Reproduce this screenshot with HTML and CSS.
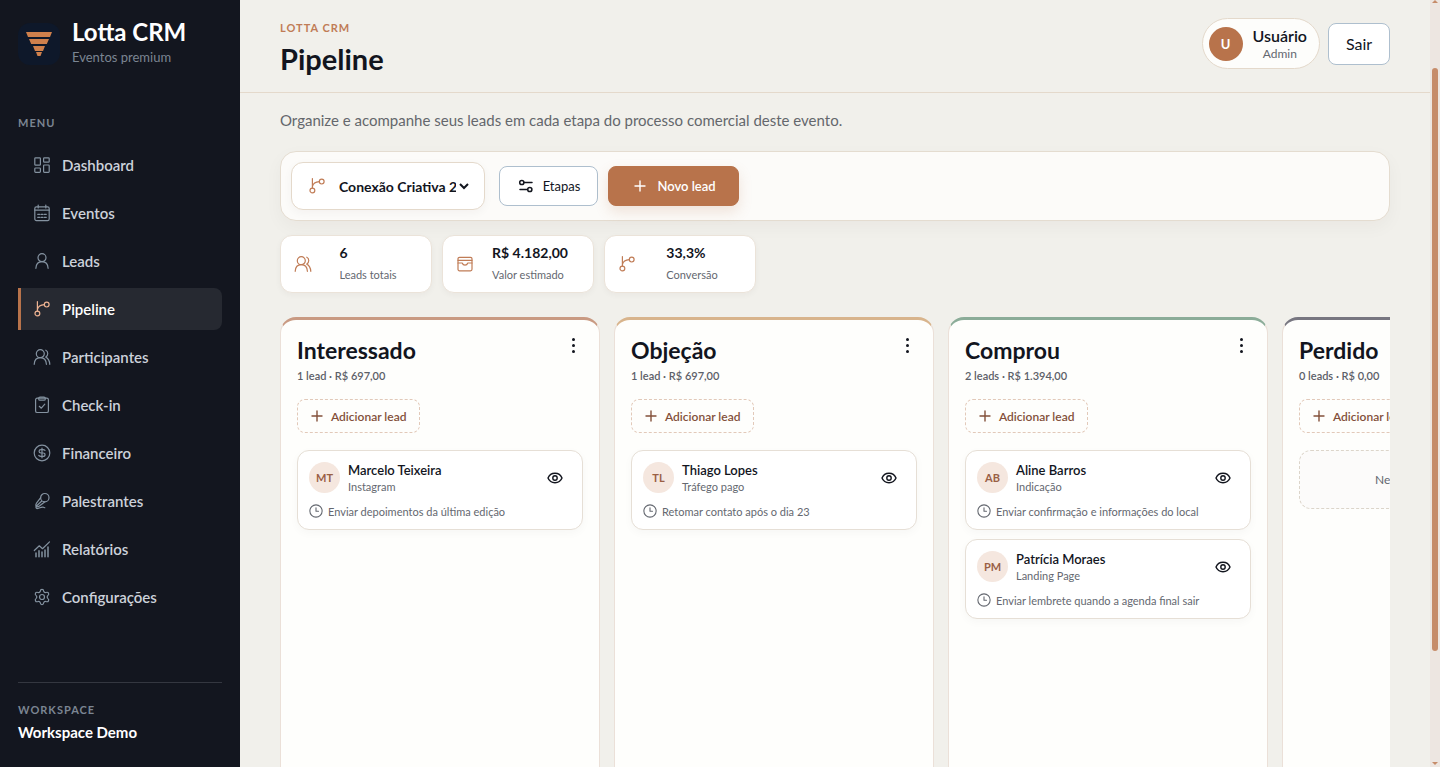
FILE: index.html
```html
<!DOCTYPE html>
<html lang="pt-BR">
<head>
    <meta charset="UTF-8">
    <meta name="viewport" content="width=device-width, initial-scale=1.0">
    <title>Lotta CRM - Pipeline</title>
    <link rel="stylesheet" href="styles.css">
</head>
<body>
    <!-- Shared icons -->
    <svg class="sprite" aria-hidden="true">
        <symbol id="i-dashboard" viewBox="0 0 18 18"><rect x="1.8" y="1.8" width="5.6" height="7.4" rx=".8"/><rect x="10.6" y="1.8" width="5.6" height="4.4" rx=".8"/><rect x="1.8" y="12" width="5.6" height="4.3" rx=".8"/><rect x="10.6" y="9" width="5.6" height="7.3" rx=".8"/></symbol>
        <symbol id="i-calendar" viewBox="0 0 18 18"><rect x="1.8" y="2.8" width="14.4" height="13.8" rx="1.6"/><path d="M5.2 1v3M12.8 1v3M1.8 6.2h14.4"/><path d="M4.7 10.3h2M8 10.3h2M11.3 10.3h2M4.7 13.3h2M8 13.3h2M11.3 13.3h2"/></symbol>
        <symbol id="i-user" viewBox="0 0 18 18"><circle cx="9" cy="5.7" r="4"/><path d="M2.9 16.3c.2-4 2.6-6.6 6.1-6.6s5.9 2.6 6.1 6.6"/></symbol>
        <symbol id="i-branch" viewBox="0 0 18 18"><circle cx="4.4" cy="13.5" r="2.4"/><circle cx="13.7" cy="4.6" r="2.4"/><path d="M4.4 1.5v9.600M4.4 9.500c.6-2.800 3-4.700 6.900-4.900"/></symbol>
        <symbol id="i-users" viewBox="0 0 18 18"><circle cx="7.3" cy="5.7" r="4"/><path d="M1.2 16.3c.2-4 2.6-6.6 6.1-6.6s5.9 2.6 6.1 6.6"/><path d="M12.8 2.2c2.6 1.1 2.6 5.5 0 6.9 2.3 1.2 3.7 3.5 4 7.2"/></symbol>
        <symbol id="i-check" viewBox="0 0 18 18"><rect x="2.6" y="2.2" width="12.8" height="14.3" rx="1.6"/><rect x="5.7" y="1.2" width="6.6" height="3" rx="1.3"/><path d="M6.3 10.3l2 1.9 3.5-4"/></symbol>
        <symbol id="i-money" viewBox="0 0 18 18"><circle cx="9" cy="9" r="7.8"/><path d="M9 4.2v9.600M12 6.300c-.5-.5-1.200-.7-2-.7H8c-2.600 0-2.600 3.400 0 3.400h2c2.700 0 2.700 3.400 0 3.400H8c-.9 0-1.600-.3-2.200-.9"/></symbol>
        <symbol id="i-mic" viewBox="0 0 18 18"><circle cx="11.800" cy="5.700" r="4.200"/><path d="M7.700 5.700L3.500 11.200c-.8 1.200-.9 2.300-.5 3.300 1 .5 2.200.3 3.400-.5l5.200-4M3 14.500l5.500-5.300M3 14.500c-.3 1.400.4 2.200 1.700 2 2.200-.4 3.300-1.700 5.600-1.300l1.500.5"/></symbol>
        <symbol id="i-chart" viewBox="0 0 18 18"><path d="M1.3 10.5l5-4.700 3.200 2.900 7-6.800"/><path d="M3 13v3.700M6 10.700v6M9 12v4.700M12 10v6.700M15 7v9.700" stroke-width="1.5"/></symbol>
        <symbol id="i-gear" viewBox="0 0 18 18"><circle cx="9" cy="9" r="2.5"/><path d="M7.3 3.3C7.4 2 8 1.400 9 1.400s1.600.6 1.700 1.900c.3.900 1.200 1.400 2.200 1.200 1.300-.5 2.100-.3 2.600.6s.3 1.700-.7 2.500c-.8.800-.8 2 0 2.800 1 .8 1.200 1.600.7 2.500s-1.300 1.100-2.600.6c-1-.2-1.900.3-2.200 1.200-.1 1.300-.7 1.900-1.700 1.900s-1.600-.6-1.700-1.900c-.3-.9-1.200-1.400-2.200-1.200-1.300.5-2.100.3-2.600-.6s-.3-1.700.7-2.500c.8-.8.8-2 0-2.800-1-.8-1.200-1.600-.7-2.500s1.300-1.100 2.600-.6c1 .2 1.900-.3 2.200-1.200z"/></symbol>
        <symbol id="i-sliders" viewBox="0 0 18 18"><circle cx="4.800" cy="5.500" r="2.100"/><path d="M7 5.500h8M3 12.500h7.500"/><circle cx="12.800" cy="12.500" r="2.100"/></symbol>
        <symbol id="i-plus" viewBox="0 0 18 18"><path d="M9 4v10M4 9h10"/></symbol>
        <symbol id="i-wallet" viewBox="0 0 18 18"><rect x="2" y="2.300" width="14" height="13.500" rx="1.500"/><path d="M2 5.300h14M2 8h4.200c.5 1.500 1.500 2.200 2.800 2.200s2.300-.7 2.800-2.200H16"/></symbol>
        <symbol id="i-eye" viewBox="0 0 18 18"><path d="M2 9c1.200-3 3.800-4.700 7-4.700S14.800 6 16 9c-1.200 3-3.800 4.700-7 4.700S3.200 12 2 9z"/><circle cx="9" cy="9" r="2.200"/></symbol>
        <symbol id="i-clock" viewBox="0 0 18 18"><circle cx="9" cy="9" r="7.900"/><path d="M9 4.800V9.300h3.200"/></symbol>
    </svg>

    <div class="app">
        <aside class="sidebar">
            <div class="brand">
                <svg class="brand-logo" viewBox="0 0 42 42" aria-hidden="true">
                    <rect width="42" height="42" rx="12" fill="#0e182a"/>
                    <path d="M8 9h26l-2 5H10zM11 16h20l-2.200 5H13.200zM15 23h12l-2 5h-8zM18 29h6l-1.500 4h-3z" fill="#cf804c"/>
                </svg>
                <div class="brand-text">
                    <div class="brand-name">Lotta CRM</div>
                    <div class="brand-sub">Eventos premium</div>
                </div>
            </div>

            <div class="menu-label">MENU</div>
            <nav class="menu">
                <a href="#"><svg class="icon"><use href="#i-dashboard"/></svg>Dashboard</a>
                <a href="#"><svg class="icon"><use href="#i-calendar"/></svg>Eventos</a>
                <a href="#"><svg class="icon"><use href="#i-user"/></svg>Leads</a>
                <a href="#" class="active"><svg class="icon"><use href="#i-branch"/></svg>Pipeline</a>
                <a href="#"><svg class="icon"><use href="#i-users"/></svg>Participantes</a>
                <a href="#"><svg class="icon"><use href="#i-check"/></svg>Check-in</a>
                <a href="#"><svg class="icon"><use href="#i-money"/></svg>Financeiro</a>
                <a href="#"><svg class="icon"><use href="#i-mic"/></svg>Palestrantes</a>
                <a href="#"><svg class="icon"><use href="#i-chart"/></svg>Relatórios</a>
                <a href="#"><svg class="icon"><use href="#i-gear"/></svg>Configurações</a>
            </nav>

            <div class="workspace">
                <div class="workspace-label">WORKSPACE</div>
                <div class="workspace-name">Workspace Demo</div>
            </div>
        </aside>

        <div class="page">
            <header class="topbar">
                <div>
                    <div class="eyebrow">LOTTA CRM</div>
                    <h1>Pipeline</h1>
                </div>
                <div class="account">
                    <div class="user-chip">
                        <span class="user-avatar">U</span>
                        <div class="user-text">
                            <div class="user-name">Usuário</div>
                            <div class="user-role">Admin</div>
                        </div>
                    </div>
                    <button type="button" class="btn logout">Sair</button>
                </div>
            </header>

            <main class="content">
                <p class="intro">Organize e acompanhe seus leads em cada etapa do processo comercial deste evento.</p>

                <div class="toolbar">
                    <div class="event-picker">
                        <svg class="icon"><use href="#i-branch"/></svg>
                        <select id="evento" aria-label="Evento">
                            <option>Conexão Criativa 2026</option>
                        </select>
                    </div>
                    <button type="button" class="btn stages"><svg class="icon"><use href="#i-sliders"/></svg>Etapas</button>
                    <button type="button" class="btn primary"><svg class="icon"><use href="#i-plus"/></svg>Novo lead</button>
                </div>

                <div class="stats">
                    <div class="stat">
                        <svg class="icon"><use href="#i-users"/></svg>
                        <div class="stat-body"><div><div class="stat-value">6</div><div class="stat-label">Leads totais</div></div></div>
                    </div>
                    <div class="stat">
                        <svg class="icon"><use href="#i-wallet"/></svg>
                        <div class="stat-body"><div><div class="stat-value">R$ 4.182,00</div><div class="stat-label">Valor estimado</div></div></div>
                    </div>
                    <div class="stat">
                        <svg class="icon"><use href="#i-branch"/></svg>
                        <div class="stat-body"><div><div class="stat-value">33,3%</div><div class="stat-label">Conversão</div></div></div>
                    </div>
                </div>

                <div class="board">
                    <section class="column interested">
                        <div class="column-head">
                            <h2>Interessado</h2>
                            <button type="button" class="more" aria-label="Opções"><i></i><i></i><i></i></button>
                        </div>
                        <div class="column-meta">1 lead · R$ 697,00</div>
                        <button type="button" class="add-lead"><svg class="icon"><use href="#i-plus"/></svg>Adicionar lead</button>
                        <article class="card">
                            <div class="card-top">
                                <span class="avatar">MT</span>
                                <div class="card-who"><div class="card-name">Marcelo Teixeira</div><div class="card-source">Instagram</div></div>
                                <button type="button" class="view" aria-label="Ver lead"><svg class="icon"><use href="#i-eye"/></svg></button>
                            </div>
                            <div class="card-next"><svg class="icon"><use href="#i-clock"/></svg>Enviar depoimentos da última edição</div>
                        </article>
                    </section>

                    <section class="column objection">
                        <div class="column-head">
                            <h2>Objeção</h2>
                            <button type="button" class="more" aria-label="Opções"><i></i><i></i><i></i></button>
                        </div>
                        <div class="column-meta">1 lead · R$ 697,00</div>
                        <button type="button" class="add-lead"><svg class="icon"><use href="#i-plus"/></svg>Adicionar lead</button>
                        <article class="card">
                            <div class="card-top">
                                <span class="avatar">TL</span>
                                <div class="card-who"><div class="card-name">Thiago Lopes</div><div class="card-source">Tráfego pago</div></div>
                                <button type="button" class="view" aria-label="Ver lead"><svg class="icon"><use href="#i-eye"/></svg></button>
                            </div>
                            <div class="card-next"><svg class="icon"><use href="#i-clock"/></svg>Retomar contato após o dia 23</div>
                        </article>
                    </section>

                    <section class="column bought">
                        <div class="column-head">
                            <h2>Comprou</h2>
                            <button type="button" class="more" aria-label="Opções"><i></i><i></i><i></i></button>
                        </div>
                        <div class="column-meta">2 leads · R$ 1.394,00</div>
                        <button type="button" class="add-lead"><svg class="icon"><use href="#i-plus"/></svg>Adicionar lead</button>
                        <article class="card">
                            <div class="card-top">
                                <span class="avatar">AB</span>
                                <div class="card-who"><div class="card-name">Aline Barros</div><div class="card-source">Indicação</div></div>
                                <button type="button" class="view" aria-label="Ver lead"><svg class="icon"><use href="#i-eye"/></svg></button>
                            </div>
                            <div class="card-next"><svg class="icon"><use href="#i-clock"/></svg>Enviar confirmação e informações do local</div>
                        </article>
                        <article class="card">
                            <div class="card-top">
                                <span class="avatar">PM</span>
                                <div class="card-who"><div class="card-name">Patrícia Moraes</div><div class="card-source">Landing Page</div></div>
                                <button type="button" class="view" aria-label="Ver lead"><svg class="icon"><use href="#i-eye"/></svg></button>
                            </div>
                            <div class="card-next"><svg class="icon"><use href="#i-clock"/></svg>Enviar lembrete quando a agenda final sair</div>
                        </article>
                    </section>

                    <section class="column lost">
                        <div class="column-head">
                            <h2>Perdido</h2>
                            <button type="button" class="more" aria-label="Opções"><i></i><i></i><i></i></button>
                        </div>
                        <div class="column-meta">0 leads · R$ 0,00</div>
                        <button type="button" class="add-lead"><svg class="icon"><use href="#i-plus"/></svg>Adicionar lead</button>
                        <div class="empty">Nenhum lead nesta etapa</div>
                    </section>
                </div>
            </main>
        </div>

        <div class="scrollbar" aria-hidden="true">
            <span class="arrow up"></span>
            <span class="thumb"></span>
            <span class="arrow down"></span>
        </div>
    </div>
</body>
</html>
```

FILE: styles.css
```css
* { box-sizing: border-box; }
body { margin: 0; font-family: Lato, "Open Sans", sans-serif; font-size: 16px; color: #12151e; background-color: #f1f0eb; }
button, select { font-family: inherit; color: inherit; }
h1, h2, p { margin: 0; }
.sprite { position: absolute; width: 0; height: 0; }
.icon { width: 18px; height: 18px; flex: none; fill: none; stroke: currentColor; stroke-width: 1.2; stroke-linecap: round; stroke-linejoin: round; }

.app { display: grid; grid-template-columns: 240px minmax(0, 1fr) 10px; height: 100vh; overflow: hidden; }

/* Sidebar */
.sidebar { display: flex; flex-direction: column; padding: 16px 18px 24px; background-color: #13161f; color: #ccd1da; }
.brand { display: flex; align-items: center; gap: 12px; height: 56px; }
.brand-logo { width: 42px; height: 42px; }
.brand-text { padding-bottom: 4px; }
.brand-name { font-size: 24px; line-height: 30px; font-weight: 700; color: #fff; }
.brand-sub { font-size: 13px; line-height: 20px; color: #7b8592; }
.menu-label, .workspace-label { font-size: 11px; line-height: 16px; font-weight: 700; letter-spacing: 1px; color: #7b8592; }
.menu-label { margin-top: 43px; }
.menu { display: flex; flex-direction: column; gap: 6px; margin-top: 13px; }
.menu a { display: flex; align-items: center; gap: 11px; height: 42px; padding-left: 12px; border-left: 3px solid transparent; border-radius: 0 8px 8px 0; color: #ccd1da; font-size: 15px; font-weight: 600; text-decoration: none; }
.menu .icon { color: #8492a0; }
.menu a.active { background-color: #262931; border-left-color: #b8734b; color: #fff; }
.menu a.active .icon { color: #eeb392; }
.workspace { margin-top: auto; padding-top: 19px; border-top: 1px solid #343740; }
.workspace-name { margin-top: 3px; font-size: 15px; line-height: 22px; font-weight: 700; color: #fff; }

/* Top bar */
.page { overflow: hidden; }
.topbar { display: flex; align-items: center; justify-content: space-between; height: 93px; padding: 0 40px; border-bottom: 1px solid #e4d9cb; }
.eyebrow { padding-top: 6px; font-size: 11px; line-height: 16px; font-weight: 700; letter-spacing: 1px; color: #c07c56; }
h1 { margin-top: 4px; font-size: 29px; line-height: 38px; font-weight: 700; }
.account { display: flex; align-items: center; gap: 8px; padding-bottom: 5px; }
.user-chip { display: flex; align-items: center; gap: 10px; height: 51px; padding: 0 12px 0 6px; border: 1px solid #e4d9cb; border-radius: 26px; background-color: #fdfdfb; text-align: center; }
.user-avatar { width: 34px; height: 34px; border-radius: 50%; background-color: #b8734b; color: #fff; font-size: 13px; line-height: 34px; font-weight: 700; }
.user-name { font-size: 16px; line-height: 20px; font-weight: 600; }
.user-role { font-size: 12px; line-height: 16px; color: #646870; }
.btn { display: flex; align-items: center; justify-content: center; height: 40px; padding: 0 17px; border: 1px solid #aebfce; border-radius: 8px; background-color: #fff; cursor: pointer; }
.logout { height: 42px; width: 62px; padding: 0; font-size: 16px; }

/* Pipeline content */
.content { padding: 15px 40px 0; }
.intro { font-size: 15px; line-height: 24px; color: #64676c; }
.toolbar { display: flex; align-items: center; height: 70px; margin-top: 19px; padding: 0 10px; border: 1px solid #e4dcd0; border-radius: 16px; background-color: #fcfbf9; box-shadow: 0 6px 18px rgba(40, 35, 25, 0.04); }
.event-picker { display: flex; align-items: center; gap: 13px; width: 194px; height: 48px; margin-right: 14px; padding: 0 12px 0 16px; border: 1px solid #e4d9cb; border-radius: 12px; background-color: #fff; box-shadow: 0 3px 10px rgba(40, 35, 25, 0.04); }
.event-picker .icon { margin-right: -4px; color: #c07c56; }
.event-picker select { flex: 1; min-width: 0; padding: 0; border: 0; background-color: transparent; font-size: 14px; font-weight: 700; }
.stages { gap: 8px; width: 99px; margin-right: 10px; padding: 0; font-size: 13px; }
.stages .icon { stroke-width: 1.5; }
.primary { gap: 8px; width: 131px; padding: 0; border-color: #b8734b; background-color: #b8734b; color: #fff; font-size: 13px; font-weight: 600; box-shadow: 0 6px 14px rgba(184, 115, 75, 0.18); }
.primary .icon { stroke-width: 1.4; }

.stats { display: flex; gap: 10px; margin-top: 14px; }
.stat { display: flex; align-items: center; gap: 6px; width: 152px; height: 58px; padding: 0 13px; border: 1px solid #ebe3d9; border-radius: 12px; background-color: #fff; box-shadow: 0 2px 6px rgba(40, 35, 25, 0.04); }
.stat .icon { color: #c07c56; }
.stat-body { display: flex; flex: 1; justify-content: center; padding-bottom: 2px; white-space: nowrap; }
.stat-value { font-size: 14px; line-height: 22px; font-weight: 700; }
.stat-label { margin-top: 2px; font-size: 11px; line-height: 18px; color: #646870; }

/* Board */
.board { display: flex; gap: 14px; height: 620px; margin-top: 24px; overflow: hidden; }
.column { flex: none; width: 320px; padding: 16px; border: 1px solid #ebe0d8; border-top-width: 3px; border-radius: 16px; background-color: #fefefc; }
.interested { border-top-color: #c99a82; }
.objection { border-top-color: #d8b48c; }
.bought { border-top-color: #8bac98; }
.lost { border-top-color: #777680; }
.column-head { display: flex; justify-content: space-between; }
h2 { font-size: 23px; line-height: 28px; font-weight: 700; }
.more { display: flex; flex-direction: column; align-items: center; gap: 3px; width: 20px; height: 20px; padding: 2px 0; border: 0; background: none; }
.more i { width: 3px; height: 3px; border-radius: 50%; background-color: #12151e; }
.column-meta { margin-top: 4px; font-size: 11px; line-height: 16px; font-weight: 600; color: #5c6068; }
.add-lead { display: flex; align-items: center; gap: 5px; width: 123px; height: 34px; margin: 15px 0 17px; padding: 0 0 0 10px; border: 1px dashed #e2c9b9; border-radius: 8px; background-color: transparent; color: #83503a; font-size: 12px; font-weight: 600; white-space: nowrap; }
.add-lead .icon { stroke-width: 1.4; }
.card { height: 80px; margin-bottom: 9px; padding: 11px; border: 1px solid #e6dfd6; border-radius: 12px; background-color: #fff; box-shadow: 0 3px 10px rgba(40, 35, 25, 0.03); }
.card-top { display: flex; align-items: center; gap: 8px; height: 31px; }
.avatar { width: 31px; height: 31px; border-radius: 50%; background-color: #f5e7df; color: #9a6045; font-size: 11px; line-height: 31px; font-weight: 700; text-align: center; }
.card-who { flex: 1; }
.card-name { font-size: 13px; line-height: 17px; font-weight: 600; }
.card-source { font-size: 11px; line-height: 15px; color: #646870; }
.view { display: flex; width: 32px; height: 32px; padding: 7px; border: 0; background: none; }
.view .icon { stroke-width: 1.4; }
.card-next { display: flex; align-items: center; gap: 5px; height: 16px; margin-top: 10px; color: #646870; font-size: 11px; white-space: nowrap; }
.card-next .icon { width: 14px; height: 14px; stroke-width: 1.4; }
.empty { display: flex; align-items: center; justify-content: center; height: 59px; border: 1px dashed #dcd5ca; border-radius: 12px; background-color: #fcfbfa; font-size: 12px; color: #646870; }

/* Scroll rail */
.scrollbar { display: flex; flex-direction: column; align-items: center; justify-content: space-between; height: 100%; background-color: #ede6e1; }
.thumb { width: 6px; height: 76%; margin-bottom: 6vh; border-radius: 3px; background-color: #c68c6a; }
.arrow { border: 3px solid transparent; }
.up { border-top: 0; border-bottom-color: #c68c6a; }
.down { margin-bottom: 2px; border-bottom: 0; border-top-color: #c68c6a; }
```
